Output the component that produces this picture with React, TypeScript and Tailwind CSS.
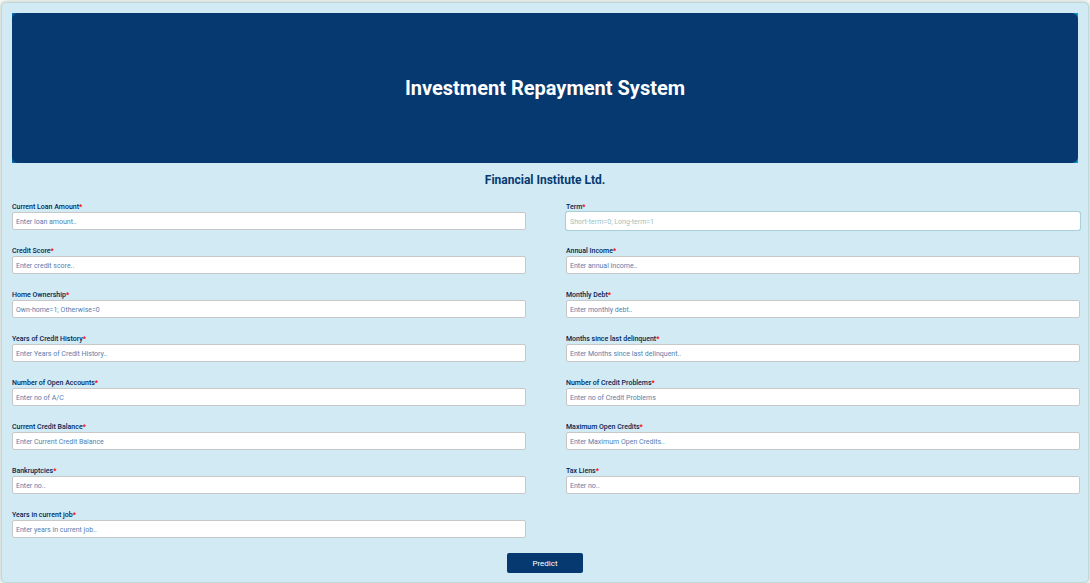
type FieldSpec = {
  id: string;
  label: string;
  placeholder: string;
  active?: boolean;
};

const fields: FieldSpec[] = [
  { id: "loan-amount", label: "Current Loan Amount", placeholder: "Enter loan amount.." },
  { id: "term", label: "Term", placeholder: "Short-term=0; Long-term=1", active: true },
  { id: "credit-score", label: "Credit Score", placeholder: "Enter credit score.." },
  { id: "annual-income", label: "Annual Income", placeholder: "Enter annual income.." },
  { id: "home-ownership", label: "Home Ownership", placeholder: "Own-home=1; Otherwise=0" },
  { id: "monthly-debt", label: "Monthly Debt", placeholder: "Enter monthly debt.." },
  { id: "credit-history", label: "Years of Credit History", placeholder: "Enter Years of Credit History.." },
  { id: "last-delinquent", label: "Months since last delinquent", placeholder: "Enter Months since last delinquent.." },
  { id: "open-accounts", label: "Number of Open Accounts", placeholder: "Enter no of A/C" },
  { id: "credit-problems", label: "Number of Credit Problems", placeholder: "Enter no of Credit Problems" },
  { id: "credit-balance", label: "Current Credit Balance", placeholder: "Enter Current Credit Balance" },
  { id: "open-credits", label: "Maximum Open Credits", placeholder: "Enter Maximum Open Credits.." },
  { id: "bankruptcies", label: "Bankruptcies", placeholder: "Enter no.." },
  { id: "tax-liens", label: "Tax Liens", placeholder: "Enter no.." },
  { id: "job-years", label: "Years in current job", placeholder: "Enter years in current job.." },
];

const inputBase =
  "h-[18px] w-full rounded-[2px] border bg-white px-[3px] pt-[2px] text-[7px] leading-[10px] outline-none";
const inputIdle = "border-[#c8c8c8] text-[#063970] placeholder:text-[#5580b0]";
const inputActive =
  "border-white text-[#063970] shadow-[0_0_0_1px_#a9d0d8,0_0_2px_#a9d0d8] placeholder:text-[#a0bfbf]";

function Field({ id, label, placeholder, active }: FieldSpec) {
  return (
    <div className="flex flex-col">
      <label htmlFor={id} className="h-[10px] text-[7px] leading-[10px] font-medium text-[#042654]">
        {label}
        <span className="font-bold text-[#ff0000]">*</span>
      </label>
      <input
        id={id}
        type="text"
        placeholder={placeholder}
        className={`${inputBase} ${active ? inputActive : inputIdle}`}
      />
    </div>
  );
}

export default function App() {
  return (
    <div className="min-h-screen bg-[#f8faf8] px-px pt-[2px] font-['Roboto',sans-serif]">
      <main className="rounded-[5px] border border-[#c0d8d8] bg-[#d2eaf4] px-[10px] pt-[10px] pb-[9px] shadow-[0_0_4px_#b4c0b8]">
        <header className="bg-linear-to-r from-[#0068b4] to-[#0098d0]">
          <div className="flex h-[150px] items-center justify-center rounded-[6px] bg-[#063970]">
            <h1 className="text-[20px] leading-6 font-bold text-white">Investment Repayment System</h1>
          </div>
        </header>
        <h2 className="mt-[9px] text-center text-[12px] leading-4 font-bold text-[#063970]">
          Financial Institute Ltd.
        </h2>
        <form onSubmit={(event) => event.preventDefault()}>
          <div className="-mr-[2px] mt-[14px] grid grid-cols-2 gap-x-10 gap-y-4">
            {fields.map((field) => (
              <Field key={field.id} {...field} />
            ))}
          </div>
          <div className="mt-[15px] flex justify-center">
            <button
              type="submit"
              className="h-5 w-[76px] rounded-[2px] bg-[#063970] pt-px text-[8px] leading-[10px] text-white"
            >
              Predict
            </button>
          </div>
        </form>
      </main>
    </div>
  );
}
